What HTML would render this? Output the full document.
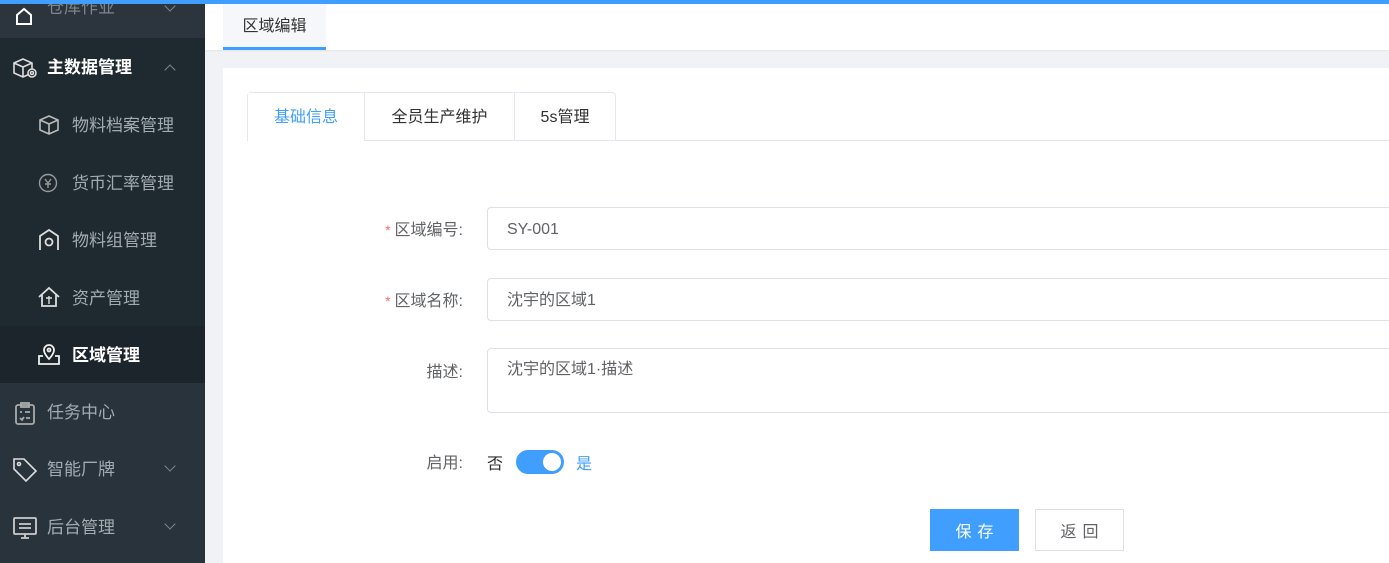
<!DOCTYPE html>
<html><head><meta charset="utf-8"><style>
*{margin:0;padding:0;box-sizing:border-box}
body{width:1389px;height:563px;overflow:hidden;position:relative;background:#f0f2f5;font-family:"Liberation Sans","Noto Sans CJK SC",sans-serif}
.topbar{position:absolute;left:0;top:0;width:1389px;height:4px;background:#409eff;z-index:5}
.side{position:absolute;left:0;top:0;width:205px;height:563px;background:#29333b}
.it{position:absolute;left:0;width:205px;height:58px;display:flex;align-items:center;font-size:17px;color:#a3abb1}
.it svg{position:absolute}
.it span{position:absolute;margin-top:-3px}
.chev{position:absolute;left:166px;width:8px;height:8px;border-right:1.5px solid #7d868c;border-bottom:1.5px solid #7d868c}
.hdr{position:absolute;left:205px;top:4px;width:1184px;height:46px;background:#fff;box-shadow:0 1px 2px rgba(0,0,0,.06)}
.ptab{position:absolute;left:18px;top:0;width:103px;height:46px;background:#f5f7fa;border-bottom:3px solid #409eff;font-size:16px;color:#333;text-align:center;line-height:46px}
.card{position:absolute;left:223px;top:68px;width:1166px;height:495px;background:#fff}
.tabs{position:absolute;left:24px;top:24px;height:49px;border:1px solid #e4e7ed;border-bottom:none;border-radius:4px 4px 0 0;display:flex}
.tabs div{height:48px;line-height:50px;font-size:16px;color:#303133;text-align:center;border-left:1px solid #e4e7ed}
.tline{position:absolute;left:140px;top:72px;width:1100px;height:1px;background:#e4e7ed}
.lbl{position:absolute;width:240px;text-align:right;font-size:16px;color:#606266}
.lbl i{font-style:normal;color:#f56c6c;font-size:14px;margin-right:4px}
.inp{position:absolute;left:264px;width:920px;border:1px solid #dcdfe6;border-radius:4px;font-size:16px;color:#606266;padding-left:19px}
.btn{position:absolute;top:441px;width:89px;height:42px;font-size:16px;text-align:center;line-height:46px;letter-spacing:6px;padding-left:6px}
</style></head><body>
<div class="topbar"></div>
<div class="side">
 <div class="it" style="top:-20px;height:58px;background:#2c353d"><svg style="left:14px;top:26px" width="20" height="20" viewBox="0 0 20 20" fill="none" stroke="#fff" stroke-width="2"><path d="M3 18V9l7-6 7 6v9z"/></svg><span style="left:47px;top:16px;color:#7d868c">仓库作业</span><div class="chev" style="top:22px;transform:rotate(45deg)"></div></div>
 <div class="it" style="top:38px;background:#1f2a30;color:#fff"><svg style="left:12px;top:19px" width="26" height="22" viewBox="0 0 26 22" fill="none" stroke="#ddd" stroke-width="1.6"><path d="M2 6l9-4 9 4v10l-9 4-9-4z M2 6l9 4 9-4 M11 10v10"/><circle cx="20" cy="16" r="4" fill="#1f2a30"/><circle cx="20" cy="16" r="1.5"/></svg><span style="left:47px;font-weight:bold;color:#fff">主数据管理</span><div class="chev" style="top:28px;transform:rotate(-135deg)"></div></div>
 <div class="it" style="top:96px;background:#1f2a30"><svg style="left:38px;top:18px" width="24" height="22" viewBox="0 0 24 22" fill="none" stroke="#bbb" stroke-width="1.6"><path d="M2 6l9-4 9 4v10l-9 4-9-4z M2 6l9 4 9-4 M11 10v10"/></svg><span style="left:72px">物料档案管理</span></div>
 <div class="it" style="top:154px;background:#1f2a30"><svg style="left:38px;top:19px" width="20" height="20" viewBox="0 0 20 20" fill="none" stroke="#999" stroke-width="1.4"><circle cx="10" cy="10" r="8.5"/><path d="M7 6l3 4 3-4M10 10v5M7 11h6"/></svg><span style="left:72px">货币汇率管理</span></div>
 <div class="it" style="top:211px;background:#1f2a30"><svg style="left:38px;top:17px" width="22" height="24" viewBox="0 0 22 24" fill="none" stroke="#ddd" stroke-width="1.8"><path d="M2 22V8l9-6 9 6v14"/><circle cx="11" cy="14" r="3.5"/></svg><span style="left:72px">物料组管理</span></div>
 <div class="it" style="top:269px;background:#1f2a30"><svg style="left:37px;top:17px" width="24" height="22" viewBox="0 0 24 22" fill="none" stroke="#ddd" stroke-width="1.8"><path d="M2 11l10-9 10 9M5 9v11h14V9"/><path d="M9 12h6M12 10v8" stroke-width="1.4"/></svg><span style="left:72px">资产管理</span></div>
 <div class="it" style="top:326px;height:57px;background:#1c252b;color:#fff"><svg style="left:37px;top:16px" width="24" height="24" viewBox="0 0 24 24" fill="none" stroke="#eee" stroke-width="1.8"><path d="M12 17s-5-5-5-9a5 5 0 0110 0c0 4-5 9-5 9z"/><circle cx="12" cy="8" r="1.5"/><path d="M6 14H2v8h20v-8h-4"/></svg><span style="left:72px;font-weight:bold">区域管理</span></div>
 <div class="it" style="top:383px"><svg style="left:14px;top:19px" width="22" height="24" viewBox="0 0 22 24" fill="none" stroke="#aaa" stroke-width="1.8"><rect x="2" y="3" width="18" height="19" rx="2"/><rect x="7" y="1" width="8" height="4"/><path d="M6 10h2M11 10h5M6 16l2 2 2-3M12 16h4"/></svg><span style="left:47px">任务中心</span></div>
 <div class="it" style="top:440px"><svg style="left:12px;top:17px" width="26" height="26" viewBox="0 0 26 26" fill="none" stroke="#ddd" stroke-width="1.6"><path d="M2 2h10l12 12-10 10L2 12z"/><circle cx="7" cy="7" r="1.5"/></svg><span style="left:47px">智能厂牌</span><div class="chev" style="top:22px;transform:rotate(45deg)"></div></div>
 <div class="it" style="top:498px"><svg style="left:12px;top:18px" width="26" height="24" viewBox="0 0 26 24" fill="none" stroke="#ccc" stroke-width="1.8"><rect x="2" y="2" width="22" height="16" rx="1"/><path d="M7 8h12M7 12h12M9 22h8M13 18v4"/></svg><span style="left:47px">后台管理</span><div class="chev" style="top:22px;transform:rotate(45deg)"></div></div>
</div>
<div class="hdr"><div class="ptab">区域编辑</div></div>
<div class="card">
 <div class="tline"></div>
 <div class="tabs">
  <div style="width:116px;border-left:none;color:#409eff;background:#fff;height:49px">基础信息</div>
  <div style="width:150px">全员生产维护</div>
  <div style="width:101px">5s管理</div>
 </div>
 <div class="lbl" style="top:148px"><i>*</i>区域编号:</div>
 <div class="inp" style="top:139px;height:43px;line-height:43px">SY-001</div>
 <div class="lbl" style="top:219px"><i>*</i>区域名称:</div>
 <div class="inp" style="top:210px;height:43px;line-height:43px">沈宇的区域1</div>
 <div class="lbl" style="top:290px">描述:</div>
 <div class="inp" style="top:280px;height:65px;line-height:42px">沈宇的区域1·描述</div>
 <div class="lbl" style="top:381px">启用:</div>
 <div style="position:absolute;left:264px;top:382px;font-size:16px;color:#303133">否</div>
 <div style="position:absolute;left:293px;top:382px;width:48px;height:24px;border-radius:12px;background:#409eff"><div style="position:absolute;right:3px;top:3px;width:18px;height:18px;border-radius:50%;background:#fff"></div></div>
 <div style="position:absolute;left:353px;top:382px;font-size:16px;color:#409eff">是</div>
 <div class="btn" style="left:707px;background:#409eff;color:#fff;border:1px solid #409eff">保存</div>
 <div class="btn" style="left:812px;background:#fff;color:#606266;border:1px solid #dcdfe6">返回</div>
</div>
</body></html>
